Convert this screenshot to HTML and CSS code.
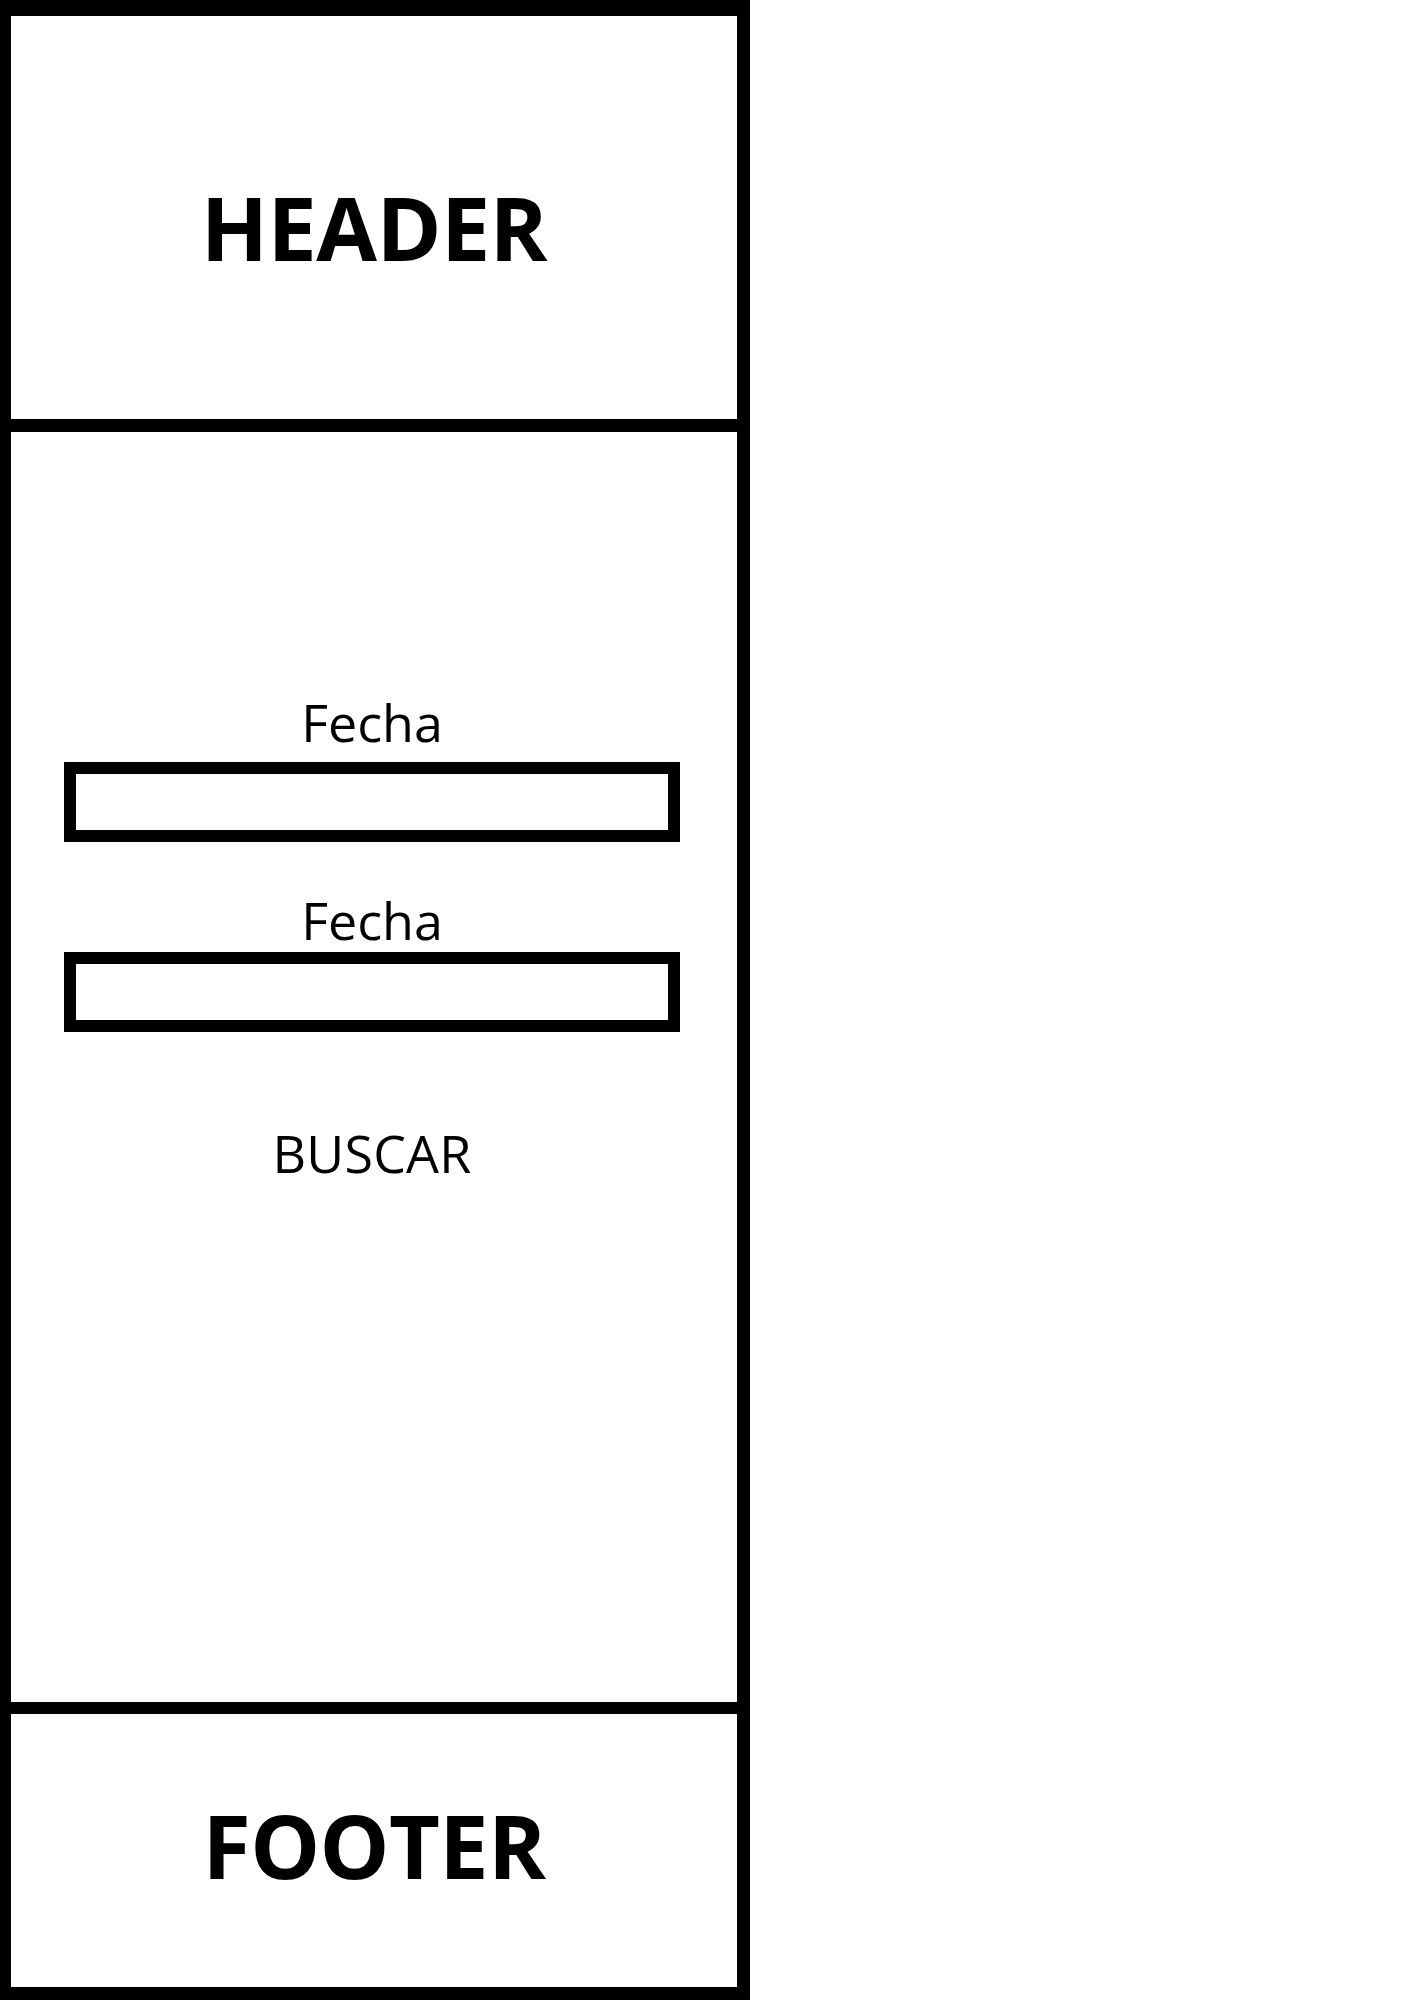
FILE: index.html
```html
<!DOCTYPE html>
<html lang="es">
<head>
    <meta charset="UTF-8">
    <meta name="viewport" content="width=device-width, initial-scale=1.0">
    <title>Buscar por fecha</title>
    <link rel="stylesheet" href="styles.css">
</head>
<body>
    <div class="frame">
        <!-- cabecera -->
        <header class="header">
            <h1>HEADER</h1>
        </header>

        <!-- formulario de busqueda -->
        <main class="main">
            <form class="search-form" onsubmit="return false;">
                <label for="fecha-desde" class="label label-first">Fecha</label>
                <input type="text" id="fecha-desde" class="field field-first">

                <label for="fecha-hasta" class="label label-second">Fecha</label>
                <input type="text" id="fecha-hasta" class="field field-second">

                <button type="submit" class="search-btn">BUSCAR</button>
            </form>
        </main>

        <!-- pie -->
        <footer class="footer">
            <h2>FOOTER</h2>
        </footer>
    </div>
</body>
</html>
```

FILE: styles.css
```css
* {
    margin: 0;
    padding: 0;
    box-sizing: border-box;
}

body {
    font-family: 'Open Sans', 'DejaVu Sans', sans-serif;
    background-color: #fff;
    color: #000;
}

.frame {
    width: 750px;
    height: 2000px;
    border-style: solid;
    border-color: #000;
    border-width: 16px 13px 13px 11px;
    display: flex;
    flex-direction: column;
}

.header {
    height: 416px;
    border-bottom: 13px solid #000;
    padding-top: 19px;
    display: flex;
    align-items: center;
    justify-content: center;
}

.header h1,
.footer h2 {
    font-size: 88px;
    font-weight: 700;
    line-height: normal;
    letter-spacing: -0.6px;
}

.main {
    height: 1270px;
    padding: 259px 57px 0 53px;
}

.search-form {
    display: flex;
    flex-direction: column;
    align-items: stretch;
    text-align: center;
}

.label {
    font-size: 52px;
    line-height: 62px;
    font-weight: 400;
}

.label-second {
    margin-top: 47px;
}

.field {
    height: 80px;
    border: 12px solid #000;
    background: #fff;
    font-family: inherit;
    font-size: 30px;
    padding: 0 12px;
    outline: none;
}

.field-first {
    margin-top: 9px;
}

.field-second {
    margin-top: 1px;
}

.search-btn {
    margin-top: 90px;
    align-self: center;
    background: none;
    border: none;
    font-family: inherit;
    font-size: 52px;
    line-height: 62px;
    letter-spacing: 0.2px;
    color: #000;
    cursor: pointer;
}

.footer {
    height: 285px;
    border-top: 12px solid #000;
    padding-bottom: 11px;
    display: flex;
    align-items: center;
    justify-content: center;
}
```
